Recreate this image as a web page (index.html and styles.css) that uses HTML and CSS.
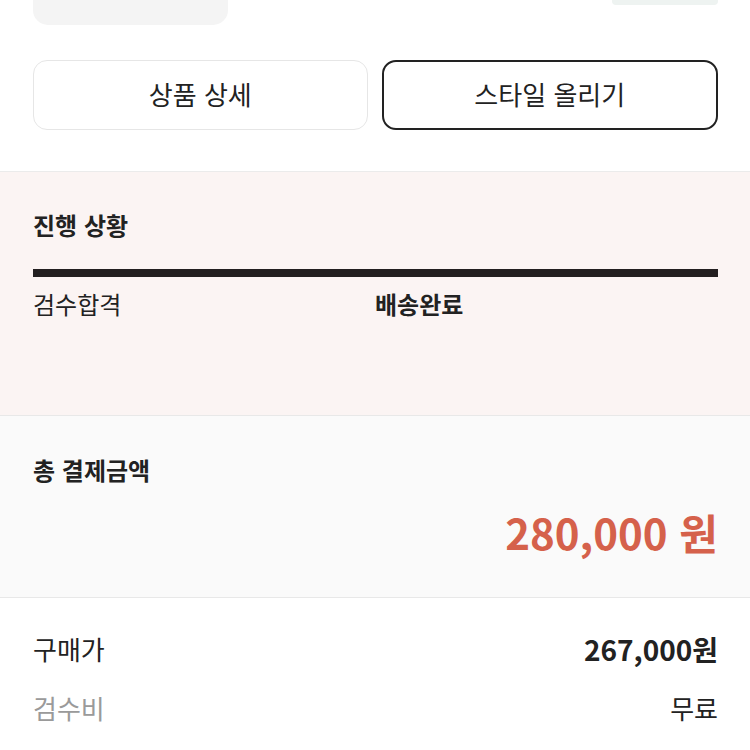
FILE: index.html
```html
<!DOCTYPE html>
<html lang="ko">
<head>
    <meta charset="utf-8">
    <title>주문 상세</title>
    <link rel="stylesheet" href="styles.css">
</head>
<body>
    <div class="product">
        <div class="thumb"></div>
        <div class="tag"></div>
    </div>

    <div class="actions">
        <button class="btn">상품 상세</button>
        <button class="btn btn-dark">스타일 올리기</button>
    </div>

    <section class="progress">
        <h3 class="sec-title">진행 상황</h3>
        <div class="bar"></div>
        <div class="steps">
            <span class="step">검수합격</span>
            <span class="step step-now">배송완료</span>
        </div>
    </section>

    <section class="payment">
        <h3 class="sec-title">총 결제금액</h3>
        <p class="total">280,000 원</p>
    </section>

    <section class="details">
        <div class="row">
            <span class="label">구매가</span>
            <span class="value strong">267,000원</span>
        </div>
        <div class="row">
            <span class="label muted">검수비</span>
            <span class="value">무료</span>
        </div>
    </section>
</body>
</html>
```

FILE: styles.css
```css
body {
    margin: 0;
    font-family: "Noto Sans CJK KR", "Noto Sans", sans-serif;
    color: #222;
    background-color: white;
}

.product {
    display: flex;
    justify-content: space-between;
    padding: 0 32px 0 33px;
}

.thumb {
    width: 195px;
    height: 25px;
    background-color: #f4f4f4;
    border-radius: 0 0 15px 15px;
}

.tag {
    width: 106px;
    height: 5px;
    background-color: #eef3f1;
    border-radius: 0 0 4px 4px;
}

.actions {
    display: flex;
    gap: 14px;
    padding: 35px 32px 41px 33px;
    border-bottom: 1px solid #ebebeb;
}

.btn {
    flex: 1;
    height: 70px;
    padding: 0 0 4px;
    font-family: inherit;
    font-size: 26px;
    color: #222;
    background-color: white;
    border: 1px solid #e6e6e6;
    border-radius: 14px;
}

.btn-dark {
    border: 2px solid #222;
}

.sec-title {
    margin: 0;
    font-size: 24px;
    font-weight: 700;
    line-height: 32px;
}

.progress {
    box-sizing: border-box;
    height: 244px;
    padding: 37px 32px 0 33px;
    background-color: #fbf4f3;
    border-bottom: 1px solid #e8e8e8;
}

.bar {
    height: 8px;
    margin-top: 28px;
    background-color: #231f20;
}

.steps {
    display: flex;
    margin-top: 10px;
    font-size: 24px;
    line-height: 34px;
}

.step {
    width: 342px;
}

.step-now {
    font-weight: 700;
}

.payment {
    box-sizing: border-box;
    height: 182px;
    padding: 38px 32px 0 33px;
    background-color: #fafafa;
    border-bottom: 1px solid #e8e8e8;
}

.total {
    margin: 23px 0 0;
    text-align: right;
    font-size: 42px;
    font-weight: 700;
    line-height: 46px;
    color: #d5614b;
}

.details {
    padding: 31px 32px 0 33px;
}

.row {
    display: flex;
    justify-content: space-between;
    align-items: center;
    font-size: 26px;
    line-height: 40px;
    margin-bottom: 19px;
}

.strong {
    font-size: 28px;
    font-weight: 700;
}

.muted {
    color: #9a9a9a;
}
```
